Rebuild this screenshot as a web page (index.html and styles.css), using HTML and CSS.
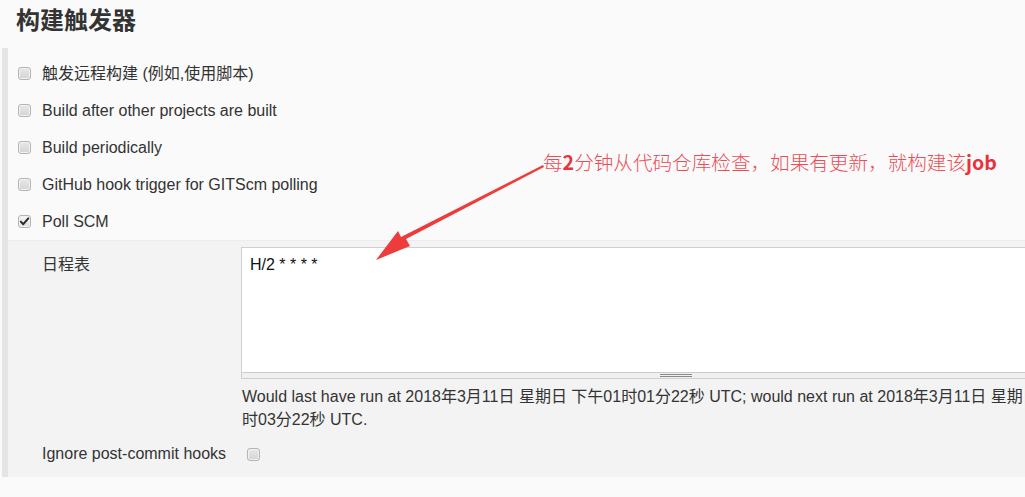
FILE: index.html
```html
<!DOCTYPE html>
<html lang="zh-CN">
<head>
<meta charset="utf-8">
<title>构建触发器</title>
<link rel="stylesheet" href="styles.css">
</head>
<body>
<div class="page">
  <h1 class="section-title">构建触发器</h1>
  <div class="section">
    <div class="opt-row"><span class="cb"></span><span class="opt-label">触发远程构建 (例如,使用脚本)</span></div>
    <div class="opt-row"><span class="cb"></span><span class="opt-label">Build after other projects are built</span></div>
    <div class="opt-row"><span class="cb"></span><span class="opt-label">Build periodically</span></div>
    <div class="opt-row"><span class="cb"></span><span class="opt-label">GitHub hook trigger for GITScm polling</span></div>
    <div class="opt-row"><span class="cb cb-checked"><svg viewBox="0 0 13 13" width="13" height="13"><path d="M2.8 6.6 L5.3 9.2 L10.3 3.4" fill="none" stroke="#2b2b2b" stroke-width="2" stroke-linecap="round" stroke-linejoin="round"/></svg></span><span class="opt-label">Poll SCM</span></div>
    <div class="nested">
      <div class="field-label">日程表</div>
      <div class="field">
        <div class="textarea">
          <div class="ta-body">H/2 * * * *</div>
          <div class="ta-resize"><span class="grip"></span></div>
        </div>
        <div class="note">Would last have run at 2018年3月11日 星期日 下午01时01分22秒 UTC; would next run at 2018年3月11日 星期日 下午01时03分22秒 UTC.</div>
      </div>
      <div class="field-label ignore-label">Ignore post-commit hooks</div>
      <div class="field ignore-field"><span class="cb"></span></div>
    </div>
  </div>
  <div class="annotation">
    <span class="ann-text">每<b>2</b>分钟从代码仓库检查，如果有更新，就构建该<b>job</b></span>
    <svg class="ann-arrow" width="170" height="100" viewBox="0 0 170 100">
      <path d="M168 2 L30 74 L34 81 L0 95 L22 66 L25 72 L167 0 Z" fill="#ee3b3b"/>
    </svg>
  </div>
</div>
</body>
</html>
```

FILE: styles.css
```css
html, body {
  margin: 0;
  padding: 0;
  overflow: hidden;
}
body {
  background: #fafafa;
  font-family: "Liberation Sans", Arial, "Noto Sans CJK SC", sans-serif;
  font-size: 16px;
  color: #333;
}
.page {
  position: relative;
  width: 1025px;
  height: 497px;
}
.section-title {
  margin: 0;
  padding: 4px 0 0 16px;
  height: 48px;
  box-sizing: border-box;
  font-family: "Noto Sans CJK SC", sans-serif;
  font-size: 24px;
  line-height: 30px;
  font-weight: 700;
  color: #333;
}
.section {
  margin-left: 2px;
  border-left: 6px solid #e4e4e4;
  padding-top: 7px;
  width: 1150px;
}
.opt-row {
  height: 37px;
  display: flex;
  align-items: center;
  padding-left: 10px;
}
.cb {
  width: 11px;
  height: 11px;
  border: 1px solid #b4b4b4;
  border-radius: 3px;
  background: linear-gradient(#e8e8e8, #d4d4d4);
  box-shadow: inset 0 0 0 1px #f2f2f2;
  display: inline-flex;
  align-items: center;
  justify-content: center;
  flex: none;
  position: relative;
}
.cb-checked {
  background: linear-gradient(#f4f4f4, #dedede);
}
.cb-checked svg {
  position: absolute;
  left: -1px;
  top: -1px;
}
.opt-label {
  margin-left: 11px;
  line-height: 20px;
}
.nested {
  background: #f3f3f3;
  border-top: 1px solid #ececec;
  display: grid;
  grid-template-columns: 199px 890px;
  padding: 6px 0 8px 34px;
}
.field-label {
  line-height: 20px;
  padding-top: 8px;
}
.textarea {
  border: 1px solid #cfcfcf;
  background: #fff;
  height: 130px;
  width: 868px;
  display: flex;
  flex-direction: column;
}
.ta-body {
  flex: 1;
  padding: 7px 8px;
  line-height: 20px;
  color: #111;
}
.ta-resize {
  height: 5px;
  border-top: 1px solid #cccccc;
  background: #f0f0f0;
  display: flex;
  justify-content: center;
  align-items: center;
}
.grip {
  width: 32px;
  height: 3px;
  border-top: 1px solid #888;
  border-bottom: 1px solid #888;
  box-sizing: border-box;
}
.note {
  margin-top: 6px;
  width: 856px;
  line-height: 23px;
  padding-left: 1px;
  color: #333;
}
.ignore-label {
  padding-top: 0;
  height: 30px;
  display: flex;
  align-items: center;
  margin-top: 8px;
}
.ignore-field {
  height: 30px;
  display: flex;
  align-items: center;
  padding-left: 6px;
  margin-top: 8px;
}
.annotation {
  position: absolute;
  left: 376px;
  top: 150px;
  width: 640px;
  height: 110px;
}
.ann-text {
  position: absolute;
  left: 167px;
  top: 0;
  font-family: "Noto Sans CJK SC", sans-serif;
  font-size: 19.6px;
  font-weight: 300;
  line-height: 24px;
  color: #ec4c56;
  white-space: nowrap;
}
.ann-text b {
  font-family: "Noto Sans CJK SC", sans-serif;
  font-weight: 600;
  color: #e8323d;
}
.ann-arrow {
  position: absolute;
  left: 0;
  top: 15px;
}
```
